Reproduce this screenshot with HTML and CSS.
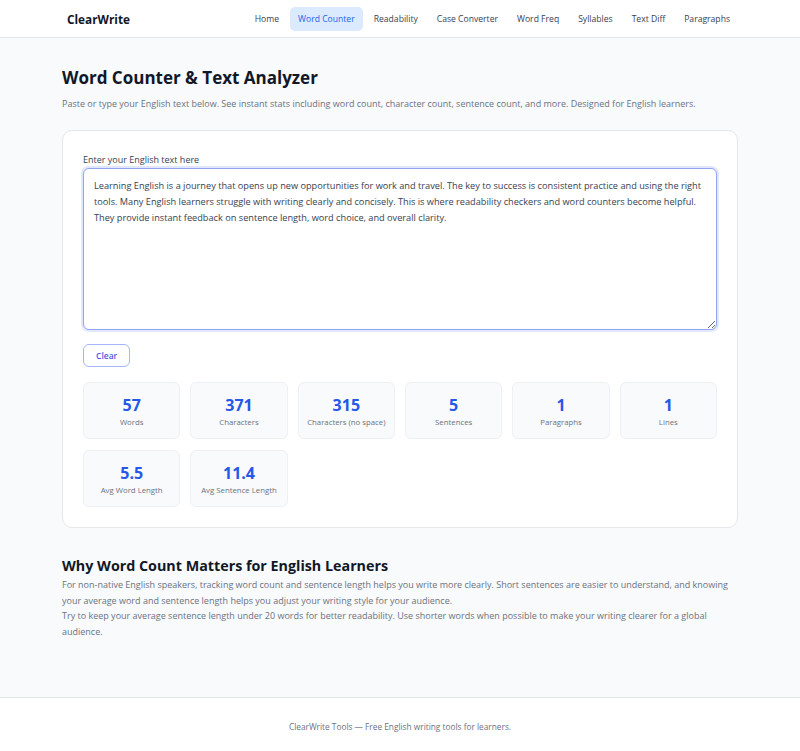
FILE: index.html
```html
<!DOCTYPE html>
<html lang="en">
<head>
    <meta charset="UTF-8">
    <meta name="viewport" content="width=device-width, initial-scale=1.0">
    <title>Word Counter &amp; Text Analyzer - ClearWrite</title>
    <link rel="stylesheet" href="styles.css">
</head>
<body>

<header>
    <div class="header-inner">
        <a class="logo" href="#">ClearWrite</a>
        <nav>
            <a href="#">Home</a>
            <a href="#" class="active">Word Counter</a>
            <a href="#">Readability</a>
            <a href="#">Case Converter</a>
            <a href="#">Word Freq</a>
            <a href="#">Syllables</a>
            <a href="#">Text Diff</a>
            <a href="#">Paragraphs</a>
        </nav>
    </div>
</header>

<main class="container">
    <h1>Word Counter &amp; Text Analyzer</h1>
    <p class="intro">Paste or type your English text below. See instant stats including word count, character count, sentence count, and more. Designed for English learners.</p>

    <div class="card">
        <label for="text-input">Enter your English text here</label>
        <textarea id="text-input" oninput="updateStats()">Learning English is a journey that opens up new opportunities for work and travel. The key to success is consistent practice and using the right tools. Many English learners struggle with writing clearly and concisely. This is where readability checkers and word counters become helpful. They provide instant feedback on sentence length, word choice, and overall clarity.</textarea>
        <div class="actions">
            <button class="button" onclick="clearText()">Clear</button>
        </div>
        <div class="stats">
            <div class="stat"><span class="num" id="words">57</span><span class="label">Words</span></div>
            <div class="stat"><span class="num" id="chars">371</span><span class="label">Characters</span></div>
            <div class="stat"><span class="num" id="chars-ns">315</span><span class="label">Characters (no space)</span></div>
            <div class="stat"><span class="num" id="sentences">5</span><span class="label">Sentences</span></div>
            <div class="stat"><span class="num" id="paragraphs">1</span><span class="label">Paragraphs</span></div>
            <div class="stat"><span class="num" id="lines">1</span><span class="label">Lines</span></div>
            <div class="stat"><span class="num" id="avg-word">5.5</span><span class="label">Avg Word Length</span></div>
            <div class="stat"><span class="num" id="avg-sentence">11.4</span><span class="label">Avg Sentence Length</span></div>
        </div>
    </div>

    <section class="info">
        <h2>Why Word Count Matters for English Learners</h2>
        <p>For non-native English speakers, tracking word count and sentence length helps you write more clearly. Short sentences are easier to understand, and knowing your average word and sentence length helps you adjust your writing style for your audience.</p>
        <p>Try to keep your average sentence length under 20 words for better readability. Use shorter words when possible to make your writing clearer for a global audience.</p>
    </section>
</main>

<footer>
    <p>ClearWrite Tools &mdash; Free English writing tools for learners.</p>
</footer>

<script>
    function updateStats() {
        const text = document.getElementById('text-input').value;
        const trimmed = text.trim();
        const words = trimmed ? trimmed.split(/\s+/) : [];
        const sentences = trimmed ? trimmed.split(/[.!?]+/).filter(s => s.trim()).length : 0;
        const paragraphs = trimmed ? trimmed.split(/\n\s*\n/).filter(p => p.trim()).length : 0;
        const lines = trimmed ? text.split('\n').filter(l => l.trim()).length : 0;
        const letters = words.reduce((sum, w) => sum + w.replace(/[^a-zA-Z0-9]/g, '').length, 0);

        document.getElementById('words').textContent = words.length;
        document.getElementById('chars').textContent = text.length;
        document.getElementById('chars-ns').textContent = text.replace(/\s/g, '').length;
        document.getElementById('sentences').textContent = sentences;
        document.getElementById('paragraphs').textContent = paragraphs;
        document.getElementById('lines').textContent = lines;
        document.getElementById('avg-word').textContent = words.length ? (letters / words.length).toFixed(1) : 0;
        document.getElementById('avg-sentence').textContent = sentences ? (words.length / sentences).toFixed(1) : 0;
    }

    function clearText() {
        document.getElementById('text-input').value = '';
        updateStats();
    }
</script>

</body>
</html>
```

FILE: styles.css
```css
/* General Styles */
* {
    box-sizing: border-box;
}
body {
    font-family: 'Open Sans', 'Noto Sans', sans-serif;
    margin: 0;
    background: #f8fafc;
    color: #1f2937;
    font-size: 9px;
}

/* Header */
header {
    background: white;
    border-bottom: 1px solid #e5e7eb;
}
.header-inner {
    max-width: 676px;
    margin: 0 auto;
    height: 37px;
    display: flex;
    align-items: center;
    justify-content: space-between;
}
.logo {
    font-weight: bold;
    font-size: 11.8px;
    color: #111827;
    text-decoration: none;
    margin-left: 5px;
}
nav {
    display: flex;
    gap: 3px;
}
nav a {
    color: #374151;
    text-decoration: none;
    font-size: 8.6px;
    padding: 6px 8px;
    border-radius: 5px;
}
nav a.active {
    background: #dbeafe;
    color: #2563eb;
}

/* Main */
.container {
    max-width: 676px;
    margin: 0 auto;
    padding: 28px 0 58px;
}
h1 {
    font-size: 17px;
    margin: 0;
    color: #111827;
}
.intro {
    color: #6b7280;
    font-size: 9px;
    margin: 8px 0 20px;
}
.card {
    background: white;
    border: 1px solid #e5e7eb;
    border-radius: 10px;
    padding: 22px 20px 20px;
}
.card label {
    display: block;
    font-size: 9px;
    color: #374151;
    margin-bottom: 2px;
}
textarea {
    display: block;
    width: 100%;
    height: 162px;
    padding: 9px 4px 9px 10px;
    border: 1px solid #93a5f0;
    border-radius: 6px;
    box-shadow: 0 0 0 2px #e0e7ff;
    font-family: inherit;
    font-size: 9.2px;
    line-height: 16px;
    color: #374151;
    resize: vertical;
    outline: none;
}
.actions {
    margin: 14px 0 15px;
}
.button {
    background: white;
    border: 1px solid #a5b4fc;
    color: #4f55e5;
    font-family: inherit;
    font-weight: 600;
    font-size: 8.5px;
    padding: 0 12px;
    height: 23px;
    border-radius: 6px;
    cursor: pointer;
}
.stats {
    display: grid;
    grid-template-columns: repeat(6, 1fr);
    gap: 11px 10px;
}
.stat {
    background: #f8fafc;
    border: 1px solid #eef0f4;
    border-radius: 6px;
    height: 57px;
    display: flex;
    flex-direction: column;
    align-items: center;
    justify-content: center;
}
.stat .num {
    font-size: 16px;
    font-weight: bold;
    color: #2558e8;
    line-height: 22px;
}
.stat .label {
    font-size: 7.8px;
    color: #6b7280;
    margin-top: 1px;
}

/* Info section */
.info {
    margin-top: 28px;
}
.info h2 {
    font-size: 14.3px;
    margin: 0 0 2px;
    color: #111827;
}
.info p {
    margin: 0;
    color: #6b7280;
    font-size: 9px;
    line-height: 15.5px;
}

/* Footer */
footer {
    background: white;
    border-top: 1px solid #e5e7eb;
    text-align: center;
    padding: 15px 0 30px;
    color: #6b7280;
    font-size: 8.3px;
}
```
